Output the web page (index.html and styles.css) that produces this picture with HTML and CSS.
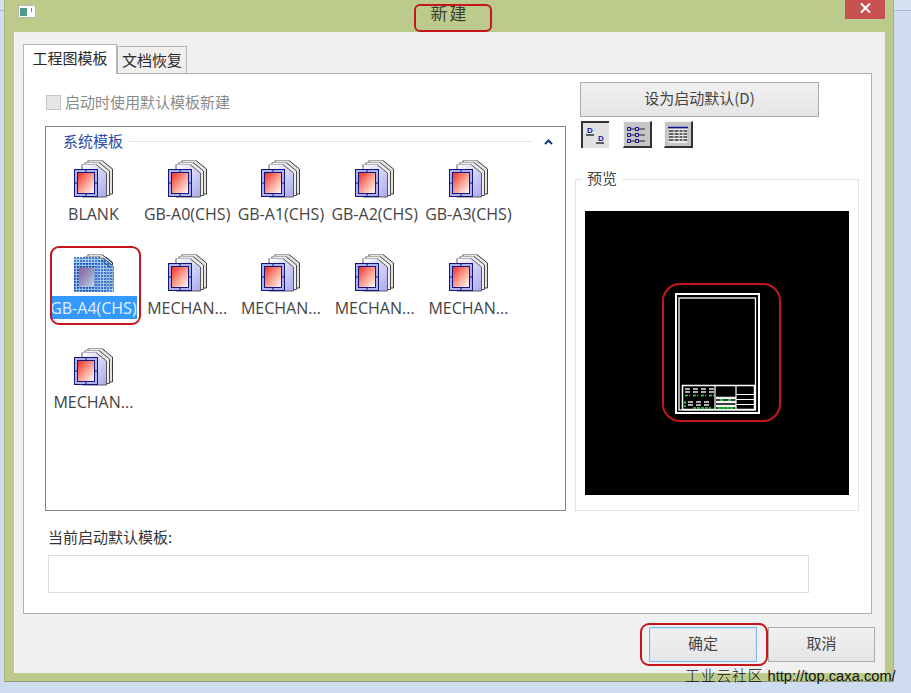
FILE: index.html
```html
<!DOCTYPE html>
<html lang="zh-CN">
<head>
<meta charset="utf-8">
<title>新建</title>
<link rel="stylesheet" href="styles.css">
</head>
<body>
<svg class="defs" aria-hidden="true">
  <defs>
    <linearGradient id="sheet" x1="0" y1="0" x2="1" y2="1">
      <stop offset="0" stop-color="#ffffff"/>
      <stop offset="1" stop-color="#a8a8ee"/>
    </linearGradient>
    <linearGradient id="paper" x1="0" y1="0" x2="1" y2="1">
      <stop offset="0" stop-color="#f22a20"/>
      <stop offset="0.55" stop-color="#fba99a"/>
      <stop offset="1" stop-color="#ffffff"/>
    </linearGradient>
    <linearGradient id="paper-selected" x1="0" y1="0" x2="1" y2="1">
      <stop offset="0" stop-color="#86609a"/>
      <stop offset="0.55" stop-color="#9c98c4"/>
      <stop offset="1" stop-color="#c4d2ea"/>
    </linearGradient>
    <pattern id="dots" width="3" height="3" patternUnits="userSpaceOnUse">
      <rect width="3" height="3" fill="#9cc8f0"/>
      <rect width="2" height="2" fill="#1d62c4"/>
    </pattern>
    <symbol id="template" viewBox="0 0 40 38">
      <path d="M14 0.500h14l10.500 8.500v25H14z" fill="#e2e2e2" stroke="#3c3c3c"/>
      <path d="M14 0.500h14" stroke="#a8a8a8"/>
      <path d="M11 2.500h14l10.500 8.500v24.500H11z" fill="#ececec" stroke="#4a4a4a"/>
      <path d="M11 2.500h14" stroke="#b0b0b0"/>
      <path d="M8 4.500h14l10.500 8.500v24H8z" fill="url(#sheet)" stroke="#5a5a5a"/>
      <path d="M8 4.500h14" stroke="#b8b8b8"/>
      <rect x="0.500" y="9.500" width="23" height="27" fill="#aeb2ec" stroke="#14147c"/>
      <rect x="3.500" y="12.500" width="17" height="21" fill="url(#paper)" stroke="#14147c"/>
      <path d="M12 9.500v3M12 33.500v3M0.500 23h3M20.500 23h3" stroke="#14147c"/>
    </symbol>
  </defs>
</svg>

<div class="window">
  <header class="titlebar">
    <svg class="app-icon" viewBox="0 0 18 13" aria-hidden="true">
      <rect x="0.500" y="0.500" width="17" height="12" fill="#fbfbfb" stroke="#b9b9a8"/>
      <rect x="2" y="3" width="7" height="8" fill="#4f9a8c"/>
      <rect x="13" y="3" width="1" height="4" fill="#7a8a7a"/>
    </svg>
    <span class="title-text">新建</span>
    <button class="close-btn" type="button" aria-label="关闭">
      <svg viewBox="0 0 11 10" aria-hidden="true"><path d="M1 0.500l9 9M10 0.500l-9 9" stroke="#fff" stroke-width="2"/></svg>
    </button>
  </header>

  <main class="client">
    <nav class="tabs">
      <span class="tab tab-active">工程图模板</span>
      <span class="tab">文档恢复</span>
    </nav>

    <section class="pane">
      <div class="pane-grid">
        <div class="left-col">
          <label class="startup-option">
            <span class="checkbox"></span>
            <span class="option-text">启动时使用默认模板新建</span>
          </label>
          <div class="listbox">
            <div class="group-head">
              <span class="group-title">系统模板</span>
              <span class="group-rule"></span>
              <svg class="chevron" viewBox="0 0 9 6" aria-hidden="true"><path d="M1 5l3.500-3.500L8 5" fill="none" stroke="#123a7a" stroke-width="2"/></svg>
            </div>
            <div class="templates">
              <div class="template"><svg class="tpl-icon"><use href="#template"/></svg><span class="tpl-name">BLANK</span></div>
              <div class="template"><svg class="tpl-icon"><use href="#template"/></svg><span class="tpl-name">GB-A0(CHS)</span></div>
              <div class="template"><svg class="tpl-icon"><use href="#template"/></svg><span class="tpl-name">GB-A1(CHS)</span></div>
              <div class="template"><svg class="tpl-icon"><use href="#template"/></svg><span class="tpl-name">GB-A2(CHS)</span></div>
              <div class="template"><svg class="tpl-icon"><use href="#template"/></svg><span class="tpl-name">GB-A3(CHS)</span></div>
              <div class="template selected">
                <svg class="tpl-icon" viewBox="0 0 40 38">
                  <use href="#template" width="40" height="38"/>
                  <path d="M0 3h26l14 9v26H0z" fill="url(#dots)" opacity="0.8"/>
                  <path d="M29 4l9 7M27 6l9 7M32 3l7 6" stroke="#123a7a" fill="none"/>
                  <rect x="5" y="14" width="15" height="18" fill="url(#paper-selected)"/>
                </svg>
                <span class="tpl-name">GB-A4(CHS)</span>
              </div>
              <div class="template"><svg class="tpl-icon"><use href="#template"/></svg><span class="tpl-name">MECHAN...</span></div>
              <div class="template"><svg class="tpl-icon"><use href="#template"/></svg><span class="tpl-name">MECHAN...</span></div>
              <div class="template"><svg class="tpl-icon"><use href="#template"/></svg><span class="tpl-name">MECHAN...</span></div>
              <div class="template"><svg class="tpl-icon"><use href="#template"/></svg><span class="tpl-name">MECHAN...</span></div>
              <div class="template"><svg class="tpl-icon"><use href="#template"/></svg><span class="tpl-name">MECHAN...</span></div>
            </div>
          </div>
        </div>

        <div class="right-col">
          <button class="btn default-btn" type="button">设为启动默认(D)</button>
          <div class="view-modes">
            <span class="view-btn pressed">
              <svg viewBox="0 0 22 20" aria-hidden="true">
                <text class="view-glyph" x="2" y="7">D</text>
                <text class="view-glyph" x="13" y="15">D</text>
                <path d="M1 9h8M11 17h8" stroke="#333" stroke-width="1.500"/>
              </svg>
            </span>
            <span class="view-btn">
              <svg viewBox="0 0 22 20" aria-hidden="true">
                <path d="M1.500 3.500h3v3h-3zM9.500 3.500h3v3h-3zM1.500 9.500h3v3h-3zM9.500 9.500h3v3h-3zM1.500 15.500h3v3h-3zM9.500 15.500h3v3h-3z" fill="none" stroke="#10109a"/>
                <path d="M5 5h4M13 5h6M5 11h4M13 11h6M5 17h4M13 17h6" stroke="#222"/>
              </svg>
            </span>
            <span class="view-btn">
              <svg viewBox="0 0 22 20" aria-hidden="true">
                <path d="M1 3.500h20" stroke="#10109a" stroke-width="1.500"/>
                <path d="M2 5h18v14H2z" fill="#ececec"/>
                <path d="M2 7h18M2 10h18M2 13h18M2 16h18" stroke="#333" stroke-width="1.500"/>
                <path d="M7 5v14M12 5v14M16 5v14" stroke="#ececec"/>
              </svg>
            </span>
          </div>
          <fieldset class="preview-group">
            <legend class="preview-legend">预览</legend>
            <div class="preview-canvas">
              <svg class="drawing" viewBox="0 0 86 122" aria-hidden="true">
                <g fill="none" stroke="#fff">
                  <rect x="2" y="2" width="83" height="119" stroke-width="2"/>
                  <rect x="5" y="6" width="76.500" height="112" stroke-width="1.300"/>
                  <rect x="8.500" y="93.500" width="72" height="24" stroke-width="1.500"/>
                  <path d="M41 93v25M62 93v25M62 102.500h19M62 107.500h19M62 112.500h19" stroke-width="1.200"/>
                </g>
                <path d="M11 97h5M19 97h5M27 97h5M35 97h5M11 100h5M19 100h5M27 100h5M35 100h5M14 110h5M22 110h5M30 110h5M14 113h5M22 113h5M30 113h5" stroke="#e8e8e8" stroke-width="1.600"/>
                <path d="M42 106h20M42 110h20M42 114h20" stroke="#f4f4f4" stroke-width="2.500"/>
                <path d="M11 103.500h5M19 103.500h5M27 103.500h5M35 103.500h5M11 109v6M19 116h18M44 116h16M46 108h4M54 108h4" stroke="#25e33a" stroke-width="1.600" stroke-dasharray="3 1"/>
              </svg>
            </div>
          </fieldset>
        </div>
      </div>

      <div class="current-default">
        <span class="current-label">当前启动默认模板:</span>
        <div class="current-field"></div>
      </div>
    </section>

    <footer class="actions">
      <button class="btn action-btn ok-btn" type="button">确定</button>
      <button class="btn action-btn" type="button">取消</button>
    </footer>
  </main>
</div>

<!-- red call-outs and the site credit sit on top of the dialog -->
<span class="callout callout-title"></span>
<span class="callout callout-item"></span>
<span class="callout callout-preview"></span>
<span class="callout callout-ok"></span>
<span class="credit"><span class="credit-cn">工业云社区</span> http://top.caxa.com/</span>
</body>
</html>
```

FILE: styles.css
```css
* {
  box-sizing: border-box;
}

html,
body {
  margin: 0;
  height: 693px;
  overflow: hidden;
}

body {
  position: relative;
  padding: 0 17px 11px 4px;
  background: linear-gradient(#d6e1f0 0, #d6e1f0 10px, #a9b8d2 10px, #a9b8d2 11px, #cfdcef 11px);
  font-family: "Noto Sans CJK SC", "Open Sans", sans-serif;
  font-size: 15px;
  color: #333;
}

.defs {
  position: absolute;
  width: 0;
  height: 0;
}

/* dialog frame */
.window {
  display: flex;
  flex-direction: column;
  height: 682px;
  background: #bccb8c;
  border-right: 1px solid #a9b67e;
  border-bottom: 1px solid #8f9a70;
  border-left: 1px solid #a9b67e;
  padding: 0 8px 8px 9px;
}

.titlebar {
  display: grid;
  grid-template-columns: 1fr auto 1fr;
  align-items: start;
  flex: 0 0 32px;
}

.app-icon {
  width: 18px;
  height: 13px;
  margin: 5px 0 0 4px;
}

.title-text {
  font-size: 17px;
  line-height: 25px;
  letter-spacing: 2px;
  color: #3a4230;
}

.close-btn {
  display: flex;
  align-items: center;
  justify-content: center;
  justify-self: end;
  width: 40px;
  height: 19px;
  padding: 0 0 3px;
  border: 0;
  background: #c75050;
}

.close-btn svg {
  width: 11px;
  height: 10px;
}

.client {
  display: flex;
  flex-direction: column;
  flex: 1;
  padding: 12px 10px 0 9px;
  background: #f0f0f0;
}

/* tabs */
.tabs {
  display: flex;
  align-items: flex-end;
  height: 29px;
}

.tab {
  display: flex;
  align-items: center;
  justify-content: center;
  width: 70px;
  height: 27px;
  padding-bottom: 2px;
  background: #efefef;
  border: 1px solid #b6b6b6;
  border-bottom: 0;
  color: #2a2a2a;
}

.tab-active {
  width: 94px;
  height: 30px;
  padding-bottom: 4px;
  margin-bottom: -1px;
  background: #fff;
  position: relative;
}

/* tab page */
.pane {
  height: 541px;
  width: 849px;
  padding: 8px 0 0 21px;
  background: #fff;
  border: 1px solid #b0b0b0;
}

.pane-grid {
  display: grid;
  grid-template-columns: 521px 284px;
  column-gap: 9px;
}

.startup-option {
  display: flex;
  align-items: center;
  gap: 4px;
  height: 44px;
  padding: 0 0 3px 1px;
  color: #8a8a8a;
}

.option-text {
  padding-bottom: 2px;
}

.checkbox {
  width: 15px;
  height: 15px;
  background: #e6e6e6;
  border: 1px solid #c6c6c6;
}

.listbox {
  height: 385px;
  border: 1px solid #858585;
  padding: 6px 0 0 0.500px;
}

.group-head {
  display: flex;
  align-items: center;
  height: 17px;
  padding-left: 16.500px;
  margin-bottom: 10px;
}

.group-title {
  padding-bottom: 2px;
  color: #2a4ea8;
  line-height: 17px;
}

.group-rule {
  width: 404px;
  height: 1px;
  margin-left: 6px;
  background: #dde3f0;
}

.chevron {
  width: 9px;
  height: 6px;
  margin-left: 11px;
}

.templates {
  display: grid;
  grid-template-columns: repeat(5, 93.750px);
  grid-auto-rows: 94px;
}

.template {
  display: flex;
  flex-direction: column;
  align-items: center;
}

.tpl-icon {
  width: 40px;
  height: 38px;
  flex: none;
  margin-left: 1px;
}

.tpl-name {
  height: 23px;
  margin-top: 4px;
  padding-top: 1px;
  font-family: "Open Sans", sans-serif;
  font-size: 16px;
  line-height: 22px;
  white-space: nowrap;
  color: #444;
}

.selected .tpl-name {
  background: #3399ff;
  color: #e4f0ff;
}

/* right column */
.right-col {
  display: flex;
  flex-direction: column;
}

.btn {
  font-family: inherit;
  font-size: 15px;
  color: #444;
  background: linear-gradient(#f1f1f1, #e5e5e5);
  border: 1px solid #acacac;
  padding: 0 0 5px;
}

.default-btn {
  width: 239px;
  height: 35px;
  margin-left: 5px;
}

.view-modes {
  display: flex;
  gap: 12px;
  margin: 4px 0 0 6px;
  height: 27px;
}

.view-btn {
  display: flex;
  align-items: center;
  justify-content: center;
  width: 29px;
  height: 27px;
  background: #c6c6c6;
  border-top: 1px solid #f5f5f5;
  border-left: 1px solid #f5f5f5;
  border-right: 2px solid #333;
  border-bottom: 2px solid #333;
}

.view-btn svg {
  width: 22px;
  height: 20px;
}

.view-btn.pressed {
  width: 28px;
  margin-right: 2px;
  background: #e2e2e2;
  border: 0;
  border-top: 2px solid #333;
  border-left: 2px solid #333;
}

.view-glyph {
  font-family: "Liberation Sans", sans-serif;
  font-size: 8px;
  font-weight: 700;
  fill: #10109a;
}

.preview-group {
  flex: 1;
  min-width: 0;
  margin: 21px 0 0;
  padding: 22px 9px 15px 9px;
  border: 1px solid #e3e3e3;
}

.preview-legend {
  margin-left: -3px;
  padding: 0 5px 2px;
  line-height: 18px;
  color: #444;
}

.preview-canvas {
  display: flex;
  align-items: center;
  justify-content: center;
  width: 264px;
  height: 284px;
  background: #000;
}

.drawing {
  width: 86px;
  height: 122px;
}

/* current default field */
.current-default {
  display: flex;
  flex-direction: column;
  padding-left: 3px;
  margin-top: 15px;
}

.current-label {
  line-height: 22px;
  color: #333;
}

.current-field {
  width: 761px;
  height: 38px;
  margin-top: 7px;
  background: #fff;
  border: 1px solid #dedede;
}

/* footer buttons */
.actions {
  display: flex;
  justify-content: flex-end;
  gap: 11px;
  padding-top: 13px;
}

.action-btn {
  width: 107px;
  height: 35px;
}

.ok-btn {
  width: 108px;
  border-color: #7eb4ea;
  box-shadow: inset 0 0 0 1px #dbe9f7;
}

/* annotations over the dialog */
.callout {
  position: absolute;
  border: 2px solid #c4161c;
  border-radius: 9px;
  pointer-events: none;
}

.callout-title {
  left: 414px;
  top: 4px;
  width: 78px;
  height: 28px;
  border-radius: 6px;
}

.callout-item {
  left: 50px;
  top: 246px;
  width: 91px;
  height: 79px;
}

.callout-preview {
  left: 662px;
  top: 283px;
  width: 119px;
  height: 139px;
  border-radius: 18px;
}

.callout-ok {
  left: 640px;
  top: 623px;
  width: 128px;
  height: 43px;
}

.credit {
  position: absolute;
  left: 685px;
  top: 665px;
  font-family: "Liberation Sans", sans-serif;
  font-size: 14.700px;
  line-height: 20px;
  color: #111;
  white-space: nowrap;
}

.credit-cn {
  font-family: "Noto Sans CJK SC", sans-serif;
  font-weight: 300;
  letter-spacing: 1px;
}
```
